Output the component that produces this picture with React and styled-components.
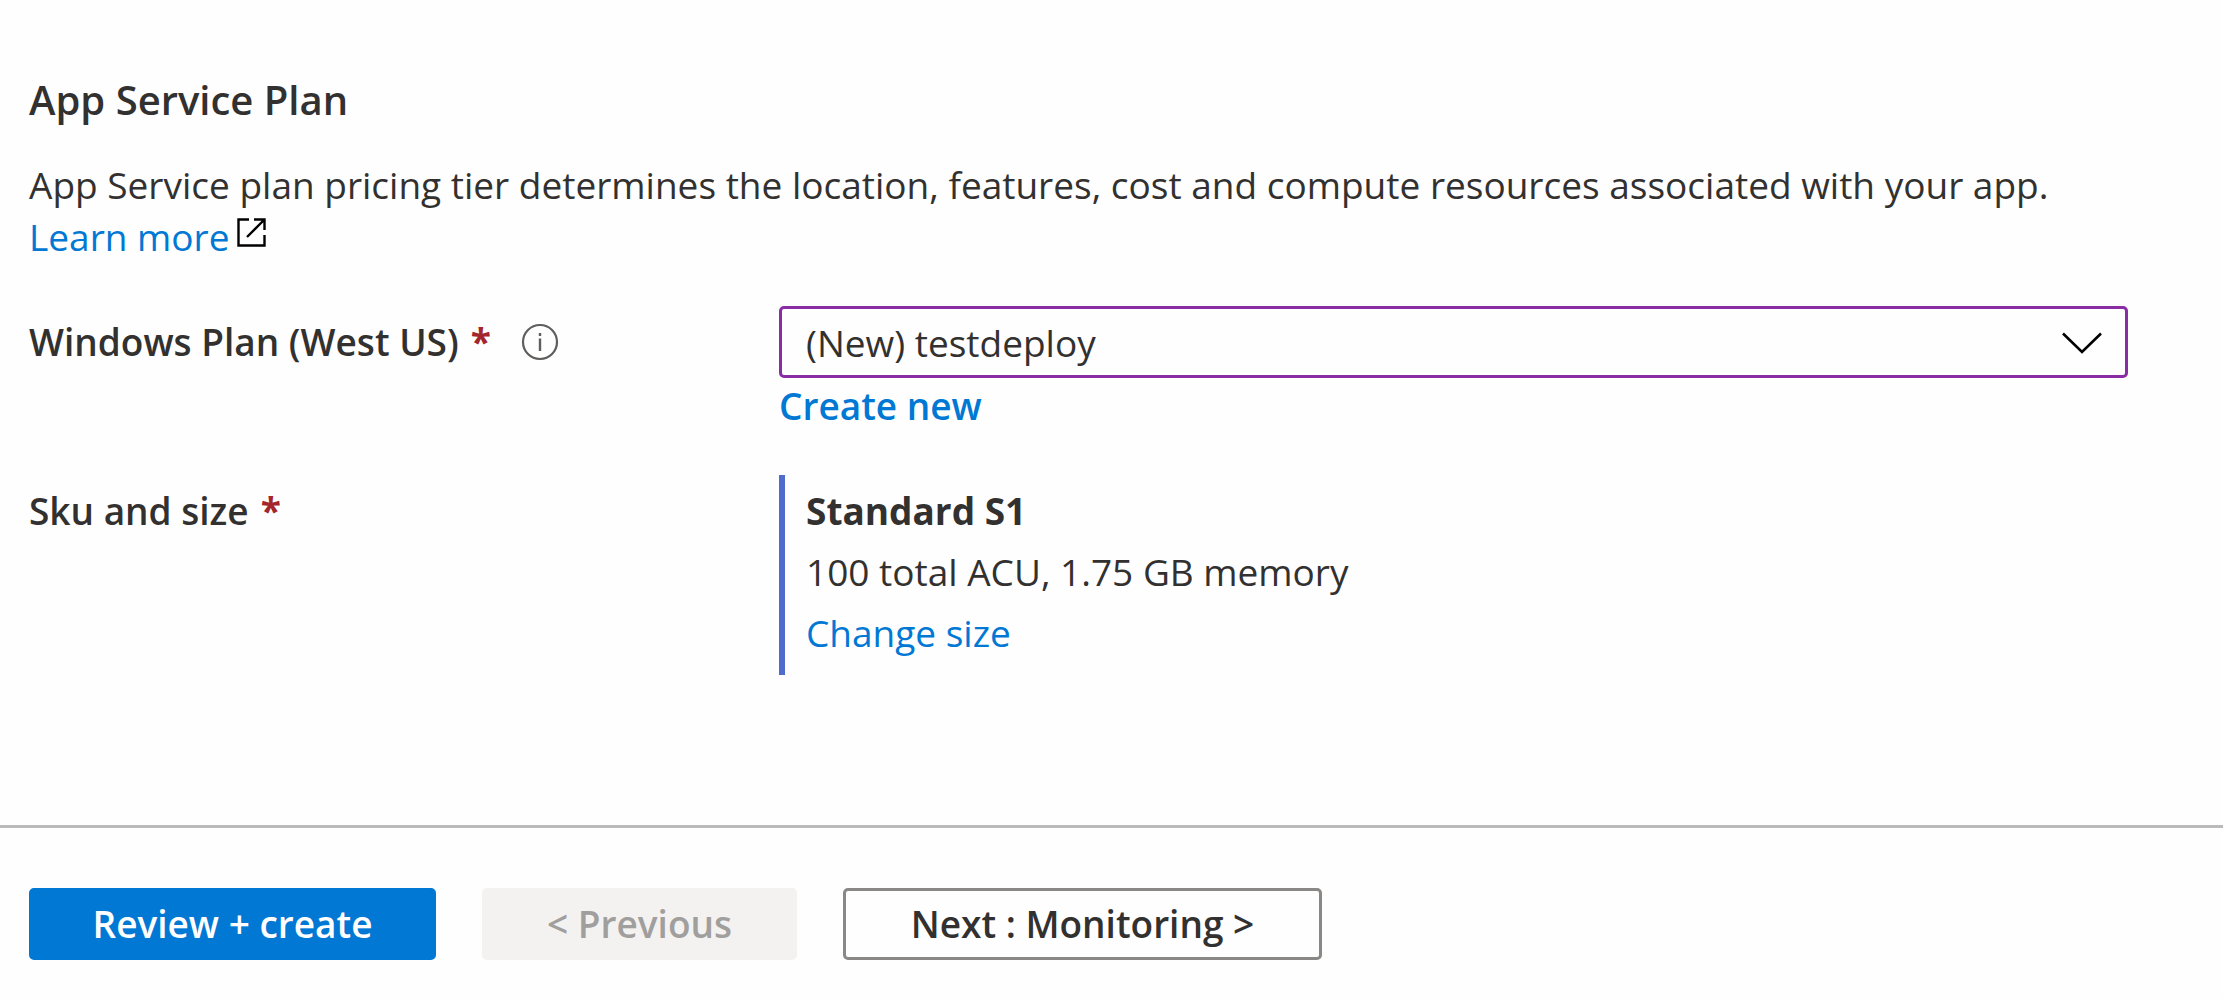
import { useState } from 'react'
import styled, { createGlobalStyle } from 'styled-components'

const GlobalStyle = createGlobalStyle`
	* {
		box-sizing: border-box;
	}
	body {
		margin: 0;
		background: #fefefe;
		color: #323130;
		font-family: 'Open Sans', 'Noto Sans', sans-serif;
		font-size: 37px;
		line-height: 52px;
	}
`

const Section = styled.section`
	padding: 70px 95px 150px 29px;
`

const Title = styled.h2`
	margin: 0 0 29px;
	font-size: 40px;
	font-weight: 600;
	line-height: 60px;
`

const Description = styled.p`
	margin: 0 0 43px;
`

const Link = styled.a`
	color: #0078d4;
	font-weight: ${(props) => (props.$strong ? 600 : 400)};
	text-decoration: none;
	&:hover {
		text-decoration: underline;
	}
`

const ExternalIcon = styled.svg`
	width: 29px;
	height: 29px;
	margin-left: 8px;
	vertical-align: 4px;
	fill: none;
	stroke: #000;
	stroke-width: 2.4;
`

const Form = styled.div`
	display: grid;
	grid-template-columns: 750px minmax(0, 1fr);
	row-gap: 43px;
`

const LabelCell = styled.div`
	display: flex;
	align-items: center;
	align-self: start;
	font-weight: 600;
	line-height: 72px;
`

const Required = styled.span`
	margin-left: 12px;
	color: #a4262c;
	font-weight: 700;
`

const InfoButton = styled.button`
	display: flex;
	margin-left: 30px;
	padding: 0;
	border: 0;
	background: none;
	cursor: pointer;
	svg {
		width: 38px;
		height: 38px;
	}
`

const SelectWrap = styled.div`
	position: relative;
	margin-bottom: 2px;
	svg {
		position: absolute;
		top: 24px;
		right: 25px;
		width: 42px;
		height: 26px;
		pointer-events: none;
	}
`

const Select = styled.select`
	display: block;
	width: 100%;
	height: 72px;
	padding: 2px 80px 0 24px;
	border: 3px solid #8a2da5;
	border-radius: 5px;
	outline: none;
	appearance: none;
	background: #fefefe;
	color: inherit;
	font: inherit;
`

const SkuBox = styled.div`
	padding: 5px 0 12px 21px;
	border-left: 6px solid #4f6bcc;
	line-height: 61px;
`

const SkuName = styled.div`
	font-weight: 700;
`

const Footer = styled.footer`
	display: flex;
	flex-wrap: wrap;
	gap: 46px;
	padding: 60px 29px 39px;
	border-top: 3px solid #bababa;
`

const variants = {
	primary: {
		background: '#0078d4',
		border: '#0078d4',
		color: '#fff',
		width: '407px',
	},
	disabled: {
		background: '#f3f2f1',
		border: '#f3f2f1',
		color: '#a19f9d',
		width: '315px',
	},
	outline: {
		background: '#fefefe',
		border: '#8a8886',
		color: '#323130',
		width: '479px',
	},
}

const Button = styled.button`
	min-width: ${(props) => variants[props.$variant].width};
	height: 72px;
	padding: 0 56px;
	border: 3px solid ${(props) => variants[props.$variant].border};
	border-radius: 5px;
	background: ${(props) => variants[props.$variant].background};
	color: ${(props) => variants[props.$variant].color};
	font: inherit;
	font-weight: 600;
	white-space: nowrap;
`

const App = () => {
	const [plan, setPlan] = useState('testdeploy')

	return (
		<>
			<GlobalStyle />
			<main>
				<Section>
					<Title>App Service Plan</Title>
					<Description>
						App Service plan pricing tier determines the location, features, cost
						and compute resources associated with your app.{' '}
						<Link href="#learn-more">
							Learn&nbsp;more
							<ExternalIcon viewBox="0 0 29 29" aria-hidden="true">
								<path d="M12 1.500H1.500v26h26V17" />
								<path d="M17 1.500h10.500V12M27 2L10 19" />
							</ExternalIcon>
						</Link>
					</Description>
					<Form>
						<LabelCell>
							<label htmlFor="plan">
								Windows Plan (West US)
								<Required>*</Required>
							</label>
							<InfoButton type="button" aria-label="About the plan">
								<svg viewBox="0 0 38 38" fill="none" stroke="#605e5c">
									<circle cx="19" cy="19" r="17" strokeWidth="2.2" />
									<path d="M19 15.5V28M19 10v3" strokeWidth="2.4" />
								</svg>
							</InfoButton>
						</LabelCell>
						<div>
							<SelectWrap>
								<Select
									id="plan"
									value={plan}
									onChange={(e) => setPlan(e.target.value)}
								>
									<option value="testdeploy">(New) testdeploy</option>
								</Select>
								<svg viewBox="0 0 42 26" aria-hidden="true">
									<path
										d="M2 3.500l19 18.500L40 3.500"
										fill="none"
										stroke="#000"
										strokeWidth="2.600"
									/>
								</svg>
							</SelectWrap>
							<Link href="#create-new" $strong>
								Create new
							</Link>
						</div>
						<LabelCell>
							<span>
								Sku and size
								<Required>*</Required>
							</span>
						</LabelCell>
						<SkuBox>
							<SkuName>Standard S1</SkuName>
							<div>100 total ACU, 1.75 GB memory</div>
							<Link href="#change-size">Change size</Link>
						</SkuBox>
					</Form>
				</Section>
				<Footer>
					<Button type="button" $variant="primary">
						Review + create
					</Button>
					<Button type="button" $variant="disabled" disabled>
						&lt; Previous
					</Button>
					<Button type="button" $variant="outline">
						Next : Monitoring &gt;
					</Button>
				</Footer>
			</main>
		</>
	)
}

export default App
